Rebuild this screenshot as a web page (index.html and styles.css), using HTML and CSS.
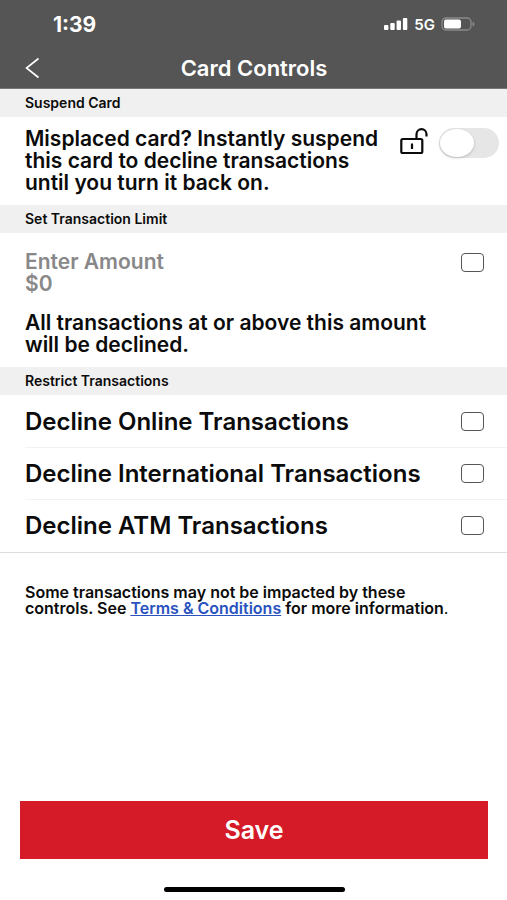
FILE: index.html
```html
<!DOCTYPE html>
<html lang="en">
<head>
<meta charset="utf-8">
<meta name="viewport" content="width=device-width, initial-scale=1">
<title>Card Controls</title>
<link rel="stylesheet" href="styles.css">
</head>
<body>
<header class="header">
  <div class="status">
    <span class="time">1:39</span>
    <div class="indicators">
      <svg width="24" height="14" viewBox="0 0 24 14" fill="#fff" aria-hidden="true">
        <rect x="0" y="8" width="4.4" height="5" rx="1"/>
        <rect x="6.3" y="6" width="4.4" height="7" rx="1"/>
        <rect x="12.6" y="3.500" width="4.400" height="9.500" rx="1"/>
        <rect x="18.900" y="1" width="4.400" height="12" rx="1"/>
      </svg>
      <span class="network">5G</span>
      <svg width="34" height="14" viewBox="0 0 34 14" aria-hidden="true">
        <rect x="1" y="1" width="29" height="12" rx="4" fill="none" stroke="#8b8b8b" stroke-width="1.300"/>
        <rect x="3" y="2.500" width="17" height="9" rx="2" fill="#fff"/>
        <path d="M31.500 4.500Q33.500 5.500 33.500 7T31.500 9.500Z" fill="#8b8b8b"/>
      </svg>
    </div>
  </div>
  <div class="titlebar">
    <button class="back" type="button" aria-label="Back">
      <svg width="16" height="22" viewBox="0 0 16 22" fill="none" stroke="#fff" stroke-width="1.600" aria-hidden="true"><path d="M13.500 1.500L1.500 11L13.500 20.500"/></svg>
    </button>
    <h1 class="title">Card Controls</h1>
  </div>
</header>
<main class="main">
  <h2 class="section">Suspend Card</h2>
  <div class="suspend">
    <label class="copy" for="suspend">Misplaced card? Instantly suspend this card to decline transactions until you turn it back on.</label>
    <svg class="lock" width="30" height="28" viewBox="0 0 30 28" fill="none" stroke="#0b0b0b" stroke-width="2.200" aria-hidden="true">
      <rect x="2.300" y="11" width="21" height="14" rx="1.500"/>
      <path d="M17.500 11V6.500A5 5.300 0 0 1 27.500 6.500V8.500M13 15.500V21"/>
    </svg>
    <input class="switch" id="suspend" type="checkbox" role="switch">
  </div>
  <h2 class="section">Set Transaction Limit</h2>
  <div class="limit">
    <div class="amount-row">
      <div class="field">
        <label for="amount">Enter Amount</label>
        <input class="amount" id="amount" type="text" value="$0">
      </div>
      <input class="check" type="checkbox" aria-label="Set transaction limit">
    </div>
    <p class="copy">All transactions at or above this amount will be declined.</p>
  </div>
  <h2 class="section">Restrict Transactions</h2>
  <div class="options">
    <div class="option"><label for="online">Decline Online Transactions</label><input class="check" id="online" type="checkbox"></div>
    <div class="option"><label for="international">Decline International Transactions</label><input class="check" id="international" type="checkbox"></div>
    <div class="option"><label for="atm">Decline ATM Transactions</label><input class="check" id="atm" type="checkbox"></div>
  </div>
  <p class="note">Some transactions may not be impacted by these controls. See <a href="#terms">Terms &amp; Conditions</a> for more information<span class="stop">.</span></p>
</main>
<footer class="footer">
  <button class="save" type="button">Save</button>
  <div class="home"></div>
</footer>
</body>
</html>
```
FILE: styles.css
```css
* { box-sizing: border-box; }

body {
  display: flex;
  flex-direction: column;
  min-height: 100vh;
  margin: 0;
  background: #fff;
  color: #0b0b0b;
  font-family: Inter, "Liberation Sans", sans-serif;
  font-weight: 600;
}

h1, h2, p { margin: 0; }
input { margin: 0; }

.header {
  background: #555;
  color: #fff;
  border-bottom: 1px solid #777;
}

.status {
  display: flex;
  justify-content: space-between;
  align-items: center;
  height: 48px;
  padding: 0 32px 0 53px;
}

.time { font-size: 21px; font-weight: 700; }

.indicators {
  display: flex;
  align-items: center;
  gap: 6px;
}

.network { font-size: 15px; }

.titlebar {
  display: grid;
  grid-template-columns: 48px 1fr 48px;
  align-items: center;
  height: 40px;
  padding: 0 16px 0 17px;
}

.back {
  display: flex;
  padding: 0 0 0 8px;
  border: 0;
  background: none;
}

.title {
  font-size: 22px;
  font-weight: 600;
  line-height: 28px;
  text-align: center;
}

.section {
  padding: 0 25px;
  background: #f0f0f0;
  font-size: 14px;
  font-weight: 600;
  line-height: 28px;
}

.suspend {
  display: flex;
  align-items: flex-start;
  padding: 11px 8px 11px 25px;
}

.suspend .copy {
  flex: 1;
  padding-right: 8px;
}

.copy {
  font-size: 21px;
  line-height: 22px;
}

.lock { margin-right: 10px; }

.switch {
  appearance: none;
  width: 60px;
  height: 30px;
  border-radius: 15px;
  background: #e6e6e6;
}

.switch::before {
  content: "";
  display: block;
  width: 34px;
  height: 28px;
  margin: 1px;
  border-radius: 50%;
  background: #fff;
  box-shadow: 0 1px 3px #0003;
}

.switch:checked { background: #34c759; }
.switch:checked::before { margin-left: 25px; }

.limit { padding: 18px 23px 11px 25px; }

.limit .copy { padding-right: 24px; }

.amount-row {
  display: flex;
  justify-content: space-between;
  align-items: flex-start;
  margin-bottom: 17px;
}

.amount-row .check { margin-top: 2px; }

.field {
  display: grid;
  color: #888;
  font-size: 21px;
  line-height: 22px;
}

.amount {
  width: 100%;
  height: 22px;
  padding: 0;
  border: 0;
  background: none;
  color: inherit;
  font: inherit;
}

.check {
  appearance: none;
  flex: none;
  width: 23px;
  height: 19px;
  border: 1px solid #555;
  border-radius: 4px;
  background: #fff;
}

.check:checked { background: #1f4fb5; }

.options {
  padding-bottom: 1px;
  border-bottom: 1px solid #ddd;
}

.option {
  display: flex;
  justify-content: space-between;
  align-items: center;
  height: 52px;
  margin-left: 25px;
  padding-right: 23px;
  font-size: 24px;
}

.option + .option { border-top: 1px solid #f2f2f2; }

.note {
  padding: 31px 36px 31px 25px;
  font-size: 16px;
  line-height: 16px;
}

.note a { color: #2a52be; }
.stop { font-weight: 400; }

.footer {
  margin-top: auto;
  padding: 0 19px 8px 20px;
}

.save {
  display: block;
  width: 100%;
  height: 58px;
  border: 0;
  background: #d41b27;
  color: #fff;
  font: inherit;
  font-size: 25px;
}

.home {
  width: 181px;
  height: 5px;
  margin: 28px auto 0;
  border-radius: 3px;
  background: #000;
}
```
